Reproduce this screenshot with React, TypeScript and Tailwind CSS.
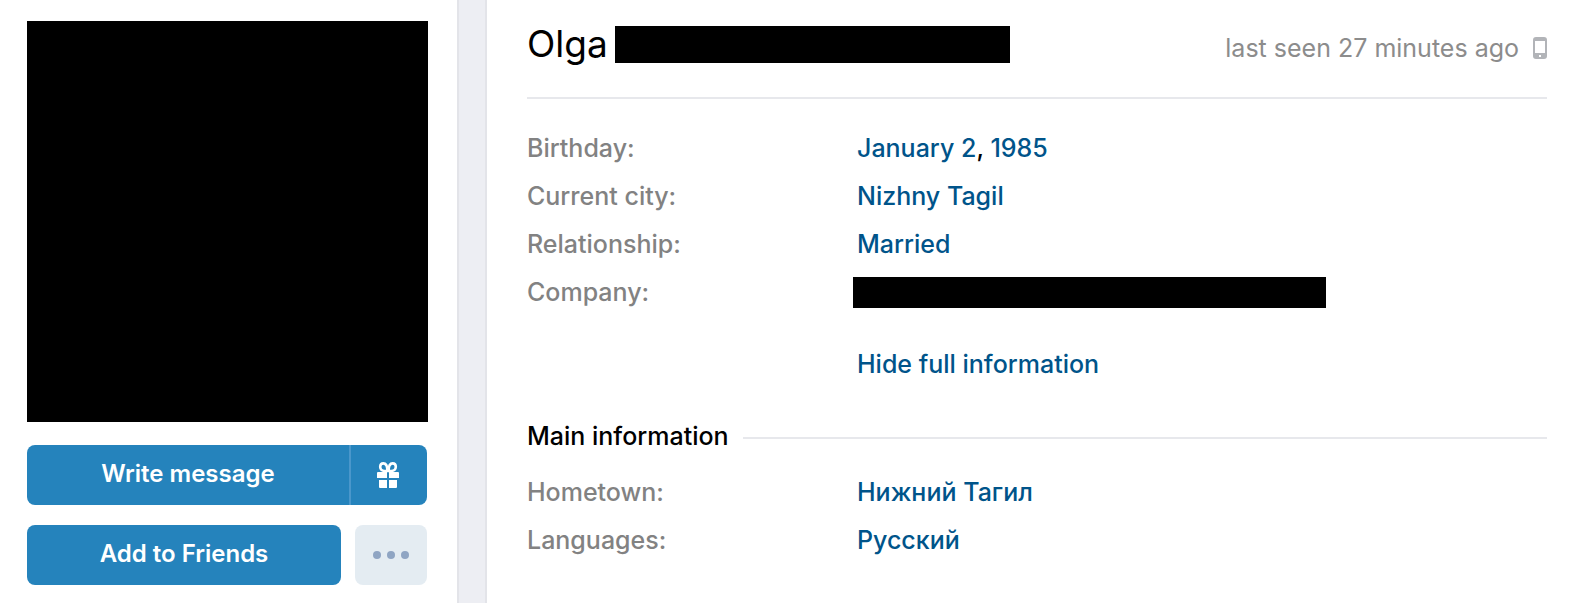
import type { ReactNode } from "react";

function GiftIcon() {
  return (
    <svg width="22" height="26" viewBox="0 0 22 26" fill="#fff" aria-hidden="true">
      <path
        d="M10.4 9C10.4 4.4 9.2 1.4 6.4 1.4C4.4 1.4 3.2 2.8 3.2 4.8C3.2 7.4 5 9 7.6 9ZM11.6 9C11.6 4.4 12.8 1.4 15.6 1.4C17.6 1.4 18.8 2.8 18.8 4.8C18.8 7.4 17 9 14.4 9Z"
        fill="none"
        stroke="#fff"
        strokeWidth="2.6"
      />
      <path d="M1 10h9v6H0v-5a1 1 0 0 1 1-1zM12 10h9a1 1 0 0 1 1 1v5H12z" />
      <path d="M2 18h8v8H3a1 1 0 0 1-1-1zM12 18h8v7a1 1 0 0 1-1 1h-7z" />
    </svg>
  );
}

function PhoneIcon() {
  return (
    <svg width="14" height="22" viewBox="0 0 14 22" fill="#b2b4b8" aria-hidden="true">
      <path
        fillRule="evenodd"
        d="M3 0h8a3 3 0 0 1 3 3v16a3 3 0 0 1-3 3H3a3 3 0 0 1-3-3V3a3 3 0 0 1 3-3zM2 4v12h10V4zM6 18v2h2v-2z"
      />
    </svg>
  );
}

function InfoRow({ label, children }: { label: string; children: ReactNode }) {
  return (
    <div className="flex h-12 items-center">
      <dt className="w-[330px] shrink-0 text-[#828282]">{label}</dt>
      <dd>{children}</dd>
    </div>
  );
}

function InfoLink({ children }: { children: ReactNode }) {
  return (
    <a href="#" className="text-[#00548a]">
      {children}
    </a>
  );
}

export default function App() {
  return (
    <main className="flex min-h-screen bg-[#edeef3] font-['Inter',sans-serif] text-[25px] leading-8 font-medium text-black">
      {/* Photo and actions */}
      <aside className="w-[459px] shrink-0 border-r-2 border-[#e3e4e9] bg-white pt-[21px] pl-[27px] text-2xl font-semibold">
        <div className="size-[401px] bg-black" />

        <div className="mt-[23px] flex h-[60px] w-[400px] overflow-hidden rounded-lg bg-[#2583bc] text-white">
          <button className="flex-1 pb-0.5">Write message</button>
          <button
            aria-label="Send gift"
            className="flex w-[78px] items-center justify-center border-l-2 border-[#4a97cb] pr-0.5"
          >
            <GiftIcon />
          </button>
        </div>

        <div className="mt-5 flex h-[60px] w-[400px] gap-[14px]">
          <button className="flex-1 rounded-lg bg-[#2583bc] pb-0.5 text-white">
            Add to Friends
          </button>
          <button
            aria-label="More"
            className="flex w-[72px] items-center justify-center gap-[6px] rounded-lg bg-[#e4ecf2]"
          >
            <span className="size-2 rounded-full bg-[#8fa5c3]" />
            <span className="size-2 rounded-full bg-[#8fa5c3]" />
            <span className="size-2 rounded-full bg-[#8fa5c3]" />
          </button>
        </div>
      </aside>

      {/* Profile */}
      <section className="ml-[26px] min-w-0 flex-1 border-l-2 border-[#e3e4e9] bg-white pr-[31px] pl-10">
        <header className="flex h-[99px] items-start justify-between border-b-2 border-[#e7e8ec] pt-[26px] font-normal">
          <div className="flex items-start gap-[7px]">
            <h1 className="text-[37px] leading-9">Olga</h1>
            <span className="h-[37px] w-[395px] bg-black" />
          </div>
          <div className="flex items-center gap-[14px] pt-[6px] text-[#8c8c8c]">
            <span>last seen 27 minutes ago</span>
            <PhoneIcon />
          </div>
        </header>

        <dl className="pt-[25px]">
          <InfoRow label="Birthday:">
            <InfoLink>January 2</InfoLink>, <InfoLink>1985</InfoLink>
          </InfoRow>
          <InfoRow label="Current city:">
            <InfoLink>Nizhny Tagil</InfoLink>
          </InfoRow>
          <InfoRow label="Relationship:">
            <InfoLink>Married</InfoLink>
          </InfoRow>
          <InfoRow label="Company:">
            <div className="-ml-1 h-[31px] w-[473px] bg-black" />
          </InfoRow>
        </dl>

        <div className="mt-6 flex h-12 items-center pl-[330px]">
          <InfoLink>Hide full information</InfoLink>
        </div>

        {/* Main information */}
        <div className="mt-6 flex h-12 items-center gap-[14px]">
          <h2>Main information</h2>
          <div className="mt-1 h-[2px] flex-1 bg-[#e7e8ec]" />
        </div>
        <dl className="pt-2">
          <InfoRow label="Hometown:">
            <InfoLink>Нижний Тагил</InfoLink>
          </InfoRow>
          <InfoRow label="Languages:">
            <InfoLink>Русский</InfoLink>
          </InfoRow>
        </dl>
      </section>
    </main>
  );
}
